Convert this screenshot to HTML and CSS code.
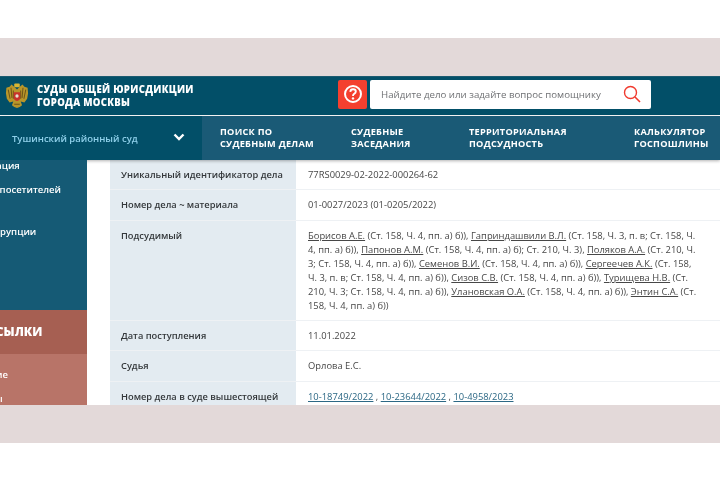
FILE: index.html
```html
<!DOCTYPE html>
<html lang="ru">
<head>
<meta charset="utf-8">
<title>Суды общей юрисдикции города Москвы</title>
<link rel="stylesheet" href="styles.css">
</head>
<body>
<div class="band">
  <div class="screen">
    <header class="head">
      <svg class="crest" width="24" height="26" viewBox="0 0 26 28">
        <path d="M13 7 L10 4 L7 1.500 L5 4 L1.500 5 L1 11 L2 17 L5 21 L9 20 L7.500 24 L10 26 L13 27 L16 26 L18.500 24 L17 20 L21 21 L24 17 L25 11 L24.500 5 L21 4 L19 1.500 L16 4 Z" fill="#b8962a"/>
        <path d="M3.500 7 L5.500 17 M6.500 5 L7.500 16 M9 8 L9 17 M22.500 7 L20.500 17 M19.500 5 L18.500 16 M17 8 L17 17 M10 23 L16 23" stroke="#6d5518" stroke-width="1.100" fill="none"/>
        <rect x="10" y="0.500" width="6" height="4" rx="1" fill="#d9b632"/>
        <path d="M9.500 10 H16.500 V16 Q16.500 18.500 13 19.500 Q9.500 18.500 9.500 16 Z" fill="#c8322b"/>
        <circle cx="13" cy="14" r="1.800" fill="#e6e0d0"/>
      </svg>
      <div class="brand">Суды общей юрисдикции<br>города Москвы</div>
      <div class="ask">
        <svg width="20" height="20" viewBox="0 0 20 20">
          <circle cx="10" cy="10" r="8" fill="none" stroke="#fff" stroke-width="2"/>
          <path d="M7.300 7.900 Q7.500 5.300 10 5.300 Q12.800 5.300 12.800 7.600 Q12.800 9 11.200 9.800 Q10 10.500 10 12" fill="none" stroke="#fff" stroke-width="1.900"/>
          <circle cx="10" cy="14.400" r="1.200" fill="#fff"/>
        </svg>
      </div>
      <div class="search">
        <span class="hint">Найдите дело или задайте вопрос помощнику</span>
        <svg width="18" height="18" viewBox="0 0 18 18">
          <circle cx="7.500" cy="7.500" r="6" fill="none" stroke="#f03a2e" stroke-width="1.400"/>
          <path d="M12 12 L17 17" stroke="#f03a2e" stroke-width="1.600"/>
        </svg>
      </div>
    </header>
    <nav class="nav">
      <div class="court">
        <span>Тушинский районный суд</span>
        <svg class="chev" width="12" height="8" viewBox="0 0 12 8"><path d="M1.500 1.500 L6 6 L10.500 1.500" fill="none" stroke="#fff" stroke-width="2.400"/></svg>
      </div>
      <div class="menu">
        <a class="m1">Поиск по<br>судебным делам</a>
        <a class="m2">Судебные<br>заседания</a>
        <a class="m3">Территориальная<br>подсудность</a>
        <a class="m4">Калькулятор<br>госпошлины</a>
      </div>
    </nav>
    <div class="main">
      <aside class="side">
        <div class="side-top">
          <div class="side-link l1">Информация</div>
          <div class="side-link l2">для посетителей</div>
          <div class="side-link l3">коррупции</div>
        </div>
        <div class="side-title">ссылки</div>
        <div class="side-list">
          <div class="sub s1">ие</div>
          <div class="sub s2">ы</div>
        </div>
      </aside>
      <section class="table">
        <div class="row r1"><div class="k">Уникальный идентификатор дела</div><div class="v">77RS0029-02-2022-000264-62</div></div>
        <div class="row r2"><div class="k">Номер дела ~ материала</div><div class="v">01-0027/2023 (01-0205/2022)</div></div>
        <div class="row r3"><div class="k">Подсудимый</div><div class="v"><u>Борисов А.Е.</u> (Ст. 158, Ч. 4, пп. а) б)), <u>Гаприндашвили В.Л.</u> (Ст. 158, Ч. 3, п. в; Ст. 158, Ч. 4, пп. а) б)), <u>Папонов А.М.</u> (Ст. 158, Ч. 4, пп. а) б); Ст. 210, Ч. 3), <u>Поляков А.А.</u> (Ст. 210, Ч. 3; Ст. 158, Ч. 4, пп. а) б)), <u>Семенов В.И.</u> (Ст. 158, Ч. 4, пп. а) б)), <u>Сергеечев А.К.</u> (Ст. 158, Ч. 3, п. в; Ст. 158, Ч. 4, пп. а) б)), <u>Сизов С.В.</u> (Ст. 158, Ч. 4, пп. а) б)), <u>Турищева Н.В.</u> (Ст. 210, Ч. 3; Ст. 158, Ч. 4, пп. а) б)), <u>Улановская О.А.</u> (Ст. 158, Ч. 4, пп. а) б)), <u>Энтин С.А.</u> (Ст. 158, Ч. 4, пп. а) б))</div></div>
        <div class="row r4"><div class="k">Дата поступления</div><div class="v">11.01.2022</div></div>
        <div class="row r5"><div class="k">Судья</div><div class="v">Орлова Е.С.</div></div>
        <div class="row r6"><div class="k">Номер дела в суде вышестоящей</div><div class="v"><a class="lnk">10-18749/2022</a> , <a class="lnk">10-23644/2022</a> , <a class="lnk">10-4958/2023</a></div></div>
      </section>
    </div>
  </div>
</div>
</body>
</html>
```
FILE: styles.css
```css
* { box-sizing: border-box; }
html, body { margin: 0; height: 480px; background: #fff; overflow: hidden; }
body { padding-top: 38px; font-family: "Open Sans", sans-serif; }
.band { background: #e3d9d9; padding: 38px 0; height: 405px; }
.screen { height: 329px; overflow: hidden; background: #fff; filter: blur(.3px); }

.head { height: 39px; background: #024f68; display: flex; align-items: center; border-top: 1px solid #1b5a70; }
.crest { margin-left: 5px; flex: none; }
.brand { margin-left: 8px; width: 296px; color: #fff; font: 800 9.600px/13.500px "Open Sans", sans-serif; letter-spacing: .3px; text-transform: uppercase; }
.ask { width: 29px; height: 29px; margin: 0 0 4px 5px; background: #f4402f; border-radius: 2px; display: flex; align-items: center; justify-content: center; flex: none; }
.search { margin: 0 0 4px 3px; width: 281px; height: 29px; background: #fff; border-radius: 2px; display: flex; align-items: center; justify-content: space-between; padding: 0 10px 0 11px; flex: none; }
.hint { font-size: 9.700px; color: #6f7174; white-space: nowrap; }

.nav { margin-top: 1px; height: 44px; display: flex; box-shadow: 0 1px 3px rgba(0,0,0,.3); position: relative; }
.court { width: 202px; background: #024f68; display: flex; align-items: center; justify-content: space-between; padding: 0 17px 0 12px; color: #8fd0ea; font-size: 9.500px; font-weight: 600; }
.chev { margin-bottom: 2px; }
.menu { flex: 1; background: #1a5a76; display: flex; align-items: center; color: #fff; font-weight: 700; font-size: 9.200px; line-height: 12.500px; letter-spacing: .25px; text-transform: uppercase; white-space: nowrap; }
.m1 { margin-left: 18px; width: 131px; }
.m2 { width: 118px; }
.m3 { width: 165px; }

.main { display: flex; height: 246px; }
.side { width: 87px; flex: none; display: flex; flex-direction: column; overflow: hidden; color: #fff; font-weight: 600; font-size: 9.500px; white-space: nowrap; }
.side-top { height: 150px; background: #155a75; position: relative; }
.side-link { position: absolute; }
.l1 { top: -1px; left: -44px; }
.l2 { top: 23px; left: -20px; }
.l3 { top: 65px; left: -17px; }
.side-title { height: 44px; background: #a65f52; font: 800 12px/44px "Open Sans", sans-serif; text-transform: uppercase; text-indent: -12px; }
.side-list { flex: 1; background: #b87468; position: relative; }
.sub { position: absolute; left: -4px; }
.s1 { top: 14px; }
.s2 { top: 38px; left: -5px; }

.table { margin-left: 23px; flex: 1; color: #474747; font-size: 9.400px; line-height: 14px; }
.row { display: flex; border-bottom: 1px solid #eef1f4; }
.r1 { height: 30px; }
.r2 { height: 31px; }
.r3 { height: 100px; }
.r4 { height: 30px; }
.r5 { height: 31px; }
.r6 { height: 30px; border-bottom: 0; }
.k { width: 186px; flex: none; background: #e3ebf1; color: #33373a; font-weight: 600; font-size: 9.300px; padding: 8px 0 0 11px; }
.v { flex: 1; padding: 8px 20px 0 12px; }
.lnk { color: #2c6885; text-decoration: underline; }
```
